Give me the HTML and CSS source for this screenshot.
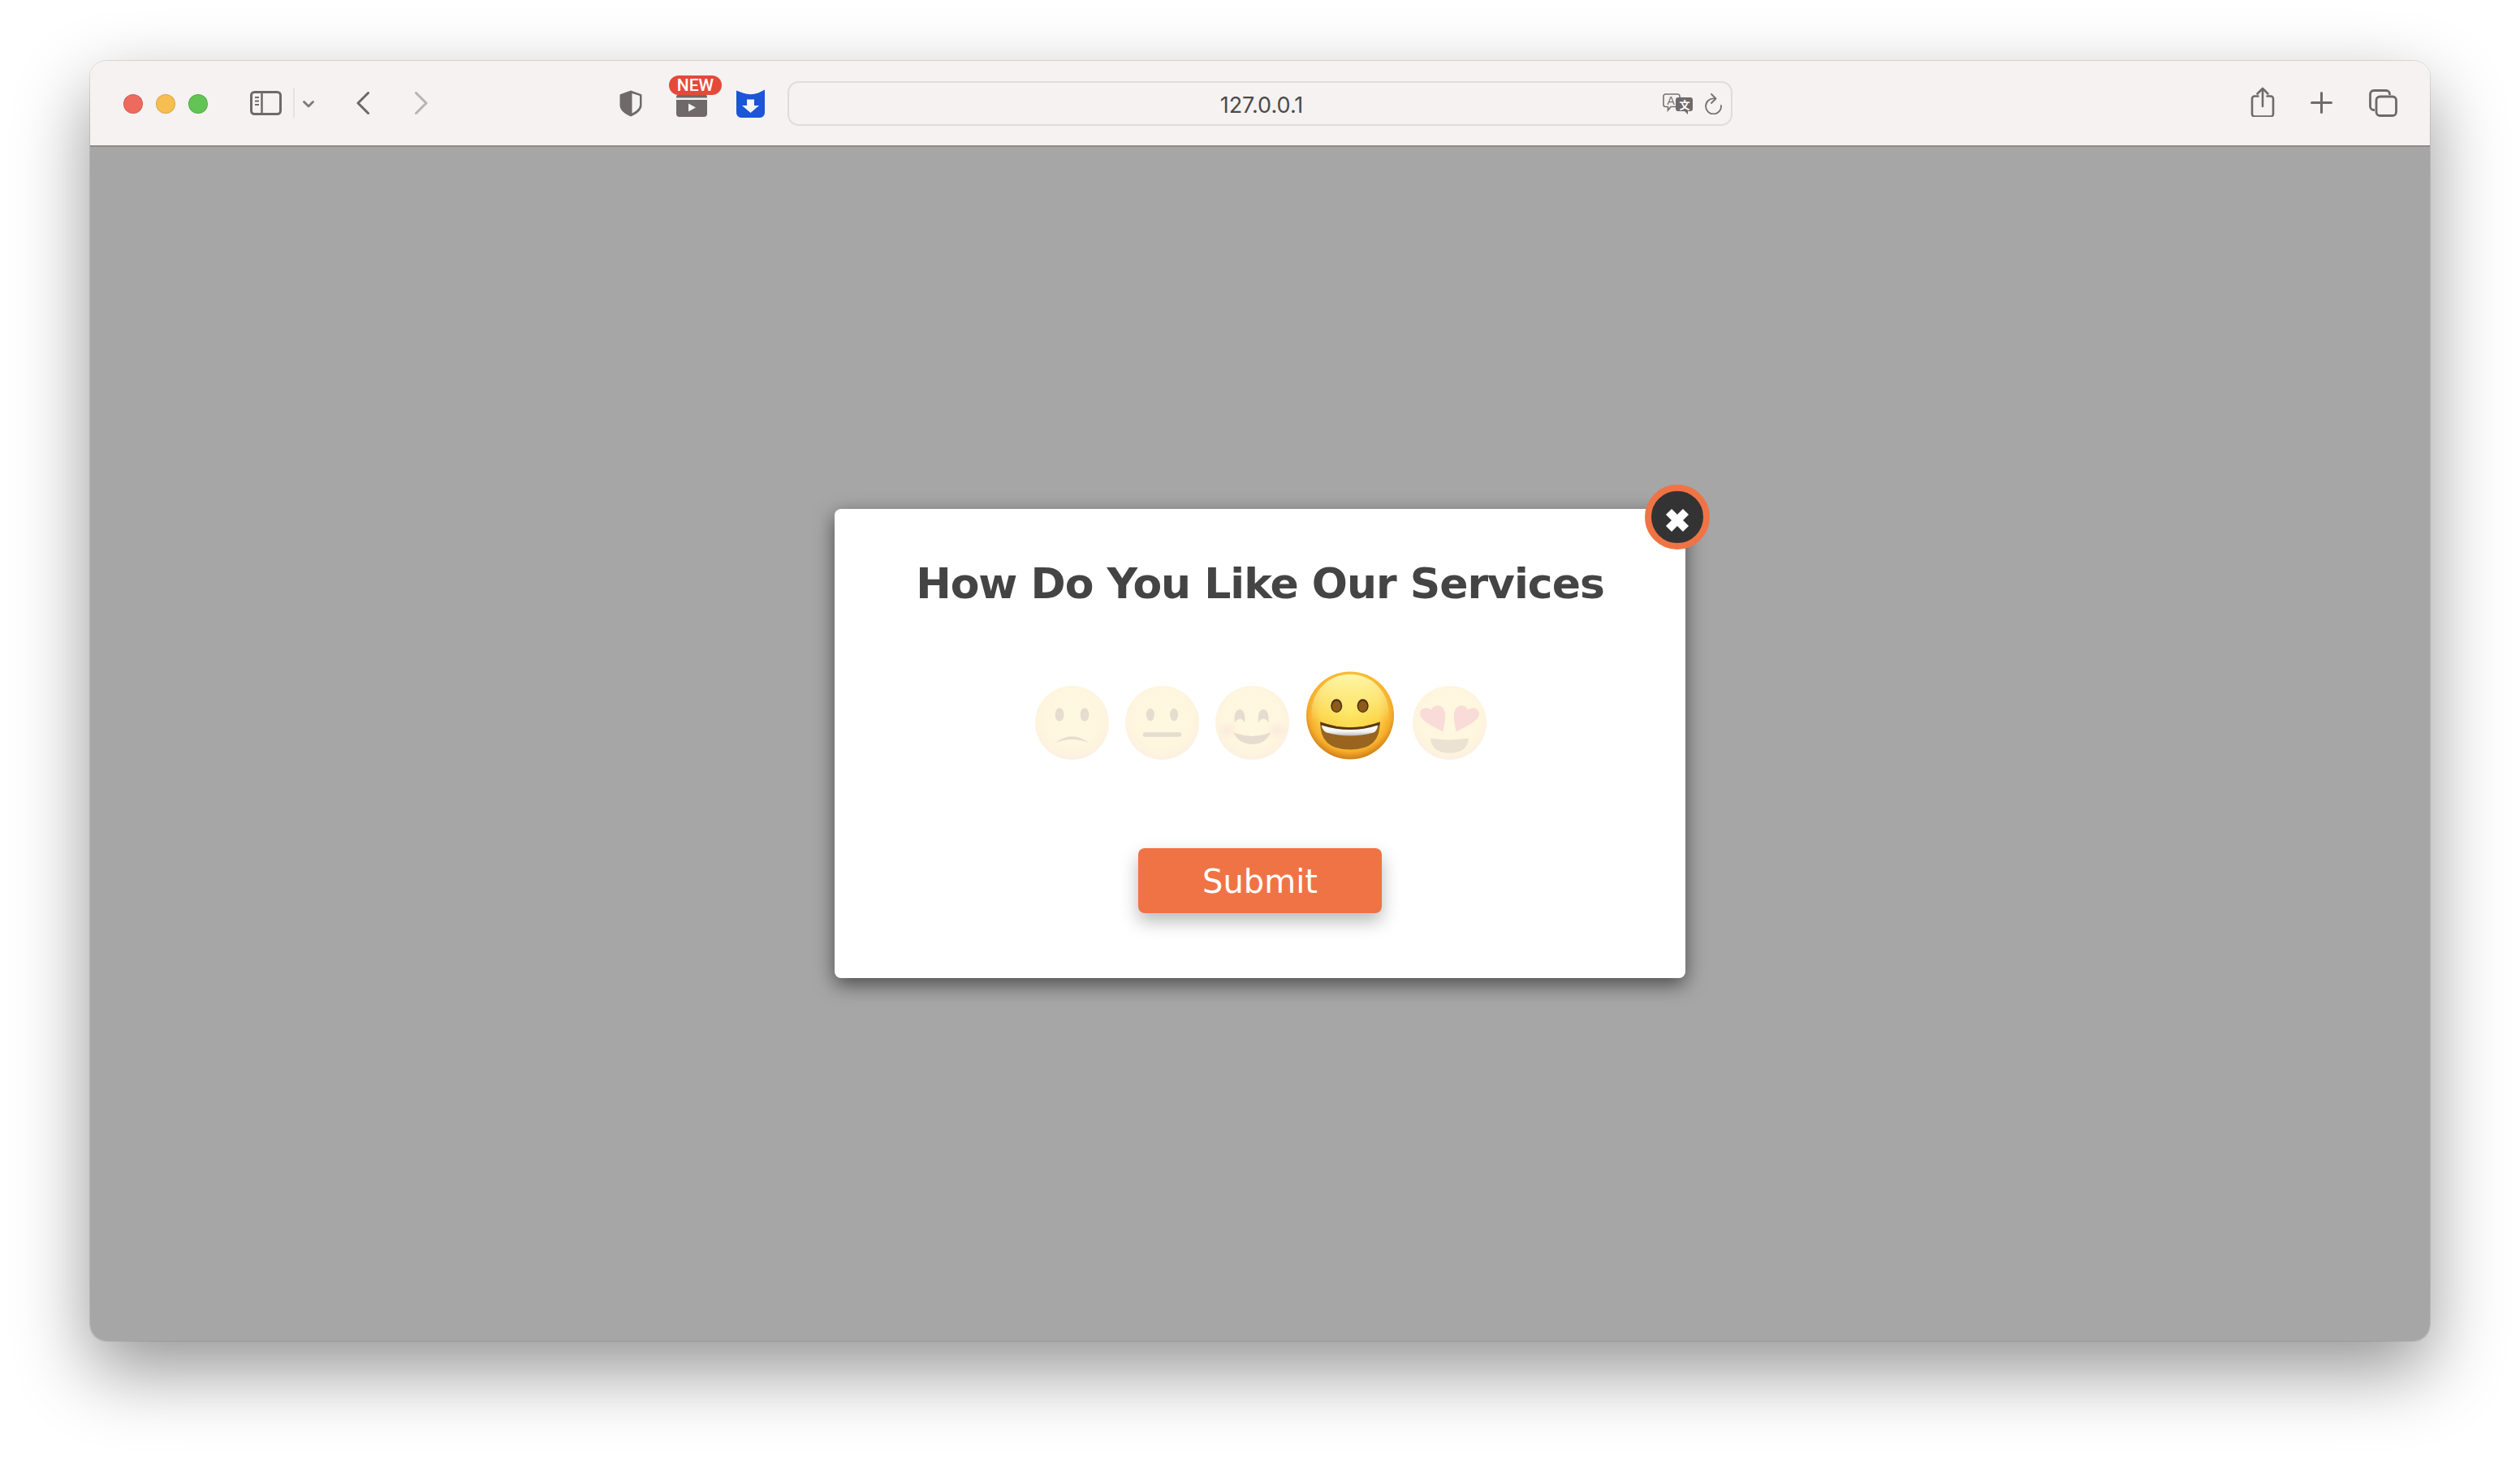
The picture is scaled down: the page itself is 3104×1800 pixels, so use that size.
FILE: index.html
```html
<!DOCTYPE html>
<html lang="en">
<head>
<meta charset="utf-8">
<title>127.0.0.1</title>
<link rel="stylesheet" href="styles.css">
</head>
<body>
<div class="window">
  <header class="toolbar">
    <div class="lights">
      <span class="light light-red"></span>
      <span class="light light-yellow"></span>
      <span class="light light-green"></span>
    </div>
    <svg class="ic-sidebar" viewBox="0 0 39 30"><rect x="1.500" y="1.500" width="36" height="27" rx="4" fill="none" stroke="#6f6a69" stroke-width="3"/><path d="M14.500 2v26" stroke="#6f6a69" stroke-width="2.500"/><path d="M6 8h5M6 12.500h5M6 17h5" stroke="#6f6a69" stroke-width="2"/></svg>
    <span class="divider"></span>
    <svg class="ic-chevron" viewBox="0 0 14 9"><path d="M1.500 1.500 7 7l5.500-5.500" fill="none" stroke="#7d7978" stroke-width="2.800" stroke-linecap="round" stroke-linejoin="round"/></svg>
    <svg class="ic-back" viewBox="0 0 16 28"><path d="M14.500 1.500 2 14l12.500 12.500" fill="none" stroke="#6b6766" stroke-width="3" stroke-linecap="round" stroke-linejoin="round"/></svg>
    <svg class="ic-forward" viewBox="0 0 16 28"><path d="M1.500 1.500 14 14 1.500 26.500" fill="none" stroke="#b6b3b2" stroke-width="3" stroke-linecap="round" stroke-linejoin="round"/></svg>
    <svg class="ic-shield" viewBox="0 0 28 33"><path d="M14 .5 1.500 5C.8 5.300.5 5.800.5 6.500V19c0 5 5.500 10.500 13.500 13.500C22 29.500 27.500 24 27.500 19V6.500c0-.7-.3-1.200-1-1.500Z" fill="#6f6a69"/><path d="M15.500 4v24.500c5.500-2.500 9.500-6.500 9.500-10.500V7Z" fill="#f5f2f1"/></svg>
    <div class="media">
      <svg class="ic-media" viewBox="0 0 38 29"><path d="M0 5a4 4 0 0 1 4-4h30a4 4 0 0 1 4 4v.5H0ZM0 8h38v17a4 4 0 0 1-4 4H4a4 4 0 0 1-4-4Z" fill="#6f6a69"/><path d="M15 12.500v10l9-5Z" fill="#f5f2f1"/></svg>
      <span class="badge">NEW</span>
    </div>
    <svg class="ic-blue" viewBox="0 0 35 35"><path d="M0 1.500 8 4.500Q17.500 8 27 4.500L35 0.500V29a6 6 0 0 1-6 6H6a6 6 0 0 1-6-6Z" fill="#1a56d6"/><path d="M13 12.500h9v7.500h6L17.500 29 7 20h6Z" fill="#f5f7fc"/></svg>
    <div class="address">
      <span class="address-text">127.0.0.1</span>
      <svg class="ic-translate" viewBox="0 0 37 26"><path d="M3.500 1h15A2.500 2.500 0 0 1 21 3.500V14a2.500 2.500 0 0 1-2.500 2.500H10L6.500 21v-4.500h-3A2.500 2.500 0 0 1 1 14V3.500A2.500 2.500 0 0 1 3.500 1Z" fill="#f5f2f1" stroke="#757170" stroke-width="1.600"/><text class="tr-a" x="5.500" y="14">A</text><path d="M19 5h15a3 3 0 0 1 3 3v11a3 3 0 0 1-3 3h-3v4l-4-4h-8a3 3 0 0 1-3-3V8a3 3 0 0 1 3-3Z" fill="#6f6a69"/><text class="tr-b" x="20.500" y="18.500">文</text></svg>
      <svg class="ic-reload" viewBox="0 0 21 26"><path d="M11.500 6.500A9.500 9.500 0 1 0 20 15" fill="none" stroke="#757170" stroke-width="1.800" stroke-linecap="round"/><path d="M8 1l5.500 5.500L8 12" fill="none" stroke="#757170" stroke-width="1.800" stroke-linecap="round" stroke-linejoin="round"/></svg>
    </div>
    <svg class="ic-share" viewBox="0 0 30 37"><path d="M9.500 11.500H5a3 3 0 0 0-3 3v19a3 3 0 0 0 3 3h20a3 3 0 0 0 3-3v-19a3 3 0 0 0-3-3h-4.500" fill="none" stroke="#6f6a69" stroke-width="2.600" stroke-linecap="round"/><path d="M15 2v22M8.500 8.500 15 2l6.500 6.500" fill="none" stroke="#6f6a69" stroke-width="2.600" stroke-linecap="round" stroke-linejoin="round"/></svg>
    <svg class="ic-plus" viewBox="0 0 27 27"><path d="M13.500 1.500v24M1.500 13.500h24" fill="none" stroke="#6f6a69" stroke-width="3" stroke-linecap="round"/></svg>
    <svg class="ic-tabs" viewBox="0 0 35 34"><path d="M7 25.500H6a4.500 4.500 0 0 1-4.500-4.500V6A4.500 4.500 0 0 1 6 1.500h15A4.500 4.500 0 0 1 25.500 6v1" fill="none" stroke="#6f6a69" stroke-width="2.800"/><rect x="9" y="9" width="24.500" height="23.500" rx="4.500" fill="none" stroke="#6f6a69" stroke-width="2.800"/></svg>
  </header>

  <main class="overlay">
    <section class="modal">
      <button class="close" type="button" aria-label="Close">
        <svg class="ic-close" viewBox="0 0 30 30"><path d="M4.500 4.500l21 21M25.500 4.500l-21 21" stroke="#fff" stroke-width="10" fill="none"/></svg>
      </button>
      <h1 class="title">How Do You Like Our Services</h1>
      <div class="faces">
        <svg class="face face-dim" viewBox="0 0 100 100">
          <defs>
            <radialGradient id="skin" cx="50%" cy="44%" r="56%">
              <stop offset="0" stop-color="#fde45c"/>
              <stop offset=".6" stop-color="#fbd446"/>
              <stop offset=".84" stop-color="#f6ae2c"/>
              <stop offset="1" stop-color="#d07d18"/>
            </radialGradient>
            <linearGradient id="glow" x1="0" y1="0" x2="0" y2="1">
              <stop offset="0" stop-color="#fff7a8"/>
              <stop offset=".62" stop-color="#fff7a8" stop-opacity="0"/>
            </linearGradient>
            <radialGradient id="skin-dim" cx="50%" cy="44%" r="56%">
              <stop offset="0" stop-color="#fff8e0"/>
              <stop offset=".72" stop-color="#fef6de"/>
              <stop offset=".93" stop-color="#fdf2e0"/>
              <stop offset="1" stop-color="#fcf0e2"/>
            </radialGradient>
            <radialGradient id="blush">
              <stop offset="0" stop-color="#fbebdc"/>
              <stop offset="1" stop-color="#fbebdc" stop-opacity="0"/>
            </radialGradient>
            <linearGradient id="teeth" x1="0" y1="0" x2="0" y2="1">
              <stop offset="0" stop-color="#ffffff"/>
              <stop offset=".6" stop-color="#f2f2f2"/>
              <stop offset="1" stop-color="#b9b9b9"/>
            </linearGradient>
          </defs>
          <ellipse cx="50" cy="50" rx="50" ry="50" fill="url(#skin-dim)"/>
          <ellipse cx="33" cy="39" rx="6" ry="9" fill="#e6dccf"/>
          <ellipse cx="67" cy="39" rx="6" ry="9" fill="#e6dccf"/>
          <path d="M28 77Q50 60 72 77Q50 68 28 77Z" fill="#e6dccf"/>
        </svg>
        <svg class="face face-dim" viewBox="0 0 100 100">
          <ellipse cx="50" cy="50" rx="50" ry="50" fill="url(#skin-dim)"/>
          <ellipse cx="34" cy="39" rx="5.500" ry="8.500" fill="#e6dccf"/>
          <ellipse cx="66" cy="39" rx="5.500" ry="8.500" fill="#e6dccf"/>
          <rect x="24" y="63" width="52" height="6" rx="2.500" fill="#e6dccf"/>
        </svg>
        <svg class="face face-dim" viewBox="0 0 100 100">
          <ellipse cx="50" cy="50" rx="50" ry="50" fill="url(#skin-dim)"/>
          <ellipse cx="16" cy="60" rx="16" ry="13" fill="url(#blush)"/>
          <ellipse cx="84" cy="60" rx="16" ry="13" fill="url(#blush)"/>
          <path d="M26 50Q25 32 33 32Q41 32 40 50Q33 39 26 50ZM58 50Q57 32 65 32Q73 32 72 50Q65 39 58 50Z" fill="#e6dccf"/>
          <path d="M24 63Q50 73 75 63Q68 79 50 79Q32 79 24 63Z" fill="#e6dccf"/>
        </svg>
        <svg class="face face-active" viewBox="0 0 100 100">
          <ellipse cx="50" cy="50" rx="50" ry="50" fill="url(#skin)"/>
          <ellipse cx="50" cy="47" rx="44" ry="44" fill="url(#glow)"/>
          <ellipse cx="34.500" cy="39" rx="6.500" ry="7.800" fill="#4d2f0e"/>
          <ellipse cx="34.500" cy="39.500" rx="5" ry="6.200" fill="#8e5a1c"/>
          <ellipse cx="64.500" cy="39" rx="6.500" ry="7.800" fill="#4d2f0e"/>
          <ellipse cx="64.500" cy="39.500" rx="5" ry="6.200" fill="#8e5a1c"/>
          <path d="M16 57.500Q50 70 84 57.500Q85 89 50 89Q15 89 16 57.500Z" fill="#98641f"/>
          <path d="M16 57.500Q50 70 84 57.500L83.500 61Q50 72.500 16.500 61Z" fill="#5a3610"/>
          <path d="M17.500 61Q50 71.500 81.500 61Q81 67 77 69.500Q50 77 23 69.500Q18.500 67 17.500 61Z" fill="url(#teeth)"/>
        </svg>
        <svg class="face face-dim" viewBox="0 0 100 100">
          <ellipse cx="50" cy="50" rx="50" ry="50" fill="url(#skin-dim)"/>
          <path d="M41 62C28 55 9 47 10 37C11 29 21 28 26 33C26 27 36 24 41 30C47 37 43 52 41 62Z" fill="#f9dbd8"/>
          <path d="M59 62C72 55 91 47 90 37C89 29 79 28 74 33C74 27 64 24 59 30C53 37 57 52 59 62Z" fill="#f9dbd8"/>
          <path d="M24 71Q50 75 76 71Q74 91 50 91Q26 91 24 71Z" fill="#ebe2d3"/>
        </svg>
      </div>
      <button class="submit" type="button">Submit</button>
    </section>
  </main>
</div>
</body>
</html>
```

FILE: styles.css
```css
* {
  box-sizing: border-box;
}

html,
body {
  margin: 0;
  height: 1800px;
  background: #ffffff;
}

body {
  padding: 75px 0 0 111px;
  overflow: hidden;
}

svg {
  display: block;
  flex: none;
}

.window {
  width: 2882px;
  height: 1577px;
  display: flex;
  flex-direction: column;
  border-radius: 20px;
  overflow: hidden;
  box-shadow: 0 0 0 1px rgba(0, 0, 0, 0.1), 0 36px 90px rgba(0, 0, 0, 0.42);
}

.toolbar {
  flex: none;
  height: 106px;
  display: flex;
  align-items: center;
  padding-left: 41px;
  background: #f5f2f1;
  border-bottom: 2px solid #8d8b8a;
}

.lights {
  display: flex;
  gap: 16px;
  margin-top: 2px;
}

.light {
  width: 24px;
  height: 24px;
  border-radius: 50%;
  border: 1px solid rgba(0, 0, 0, 0.12);
}

.light-red {
  background: #ee6a5f;
}

.light-yellow {
  background: #f6be50;
}

.light-green {
  background: #61c454;
}

.ic-sidebar {
  width: 39px;
  height: 30px;
  margin-left: 52px;
}

.divider {
  width: 2px;
  height: 36px;
  margin-left: 14px;
  background: #e4e1e0;
}

.ic-chevron {
  width: 14px;
  height: 9px;
  margin: 3px 0 0 10px;
}

.ic-back {
  width: 16px;
  height: 28px;
  margin-left: 52px;
}

.ic-forward {
  width: 16px;
  height: 28px;
  margin-left: 56px;
}

.ic-shield {
  width: 28px;
  height: 33px;
  margin: 1px 0 0 236px;
}

.media {
  position: relative;
  width: 65px;
  height: 29px;
  margin: 5px 0 0 33px;
  padding-left: 9px;
}

.ic-media {
  width: 38px;
  height: 29px;
}

.badge {
  position: absolute;
  left: 0;
  top: -22px;
  width: 65px;
  height: 24px;
  border-radius: 12px;
  background: #e5493a;
  color: #ffffff;
  font: 500 21px/24px "Roboto", sans-serif;
  text-align: center;
}

.ic-blue {
  width: 35px;
  height: 35px;
  margin: 1px 0 0 18px;
}

.address {
  position: relative;
  width: 1164px;
  height: 55px;
  margin: 1px 0 0 28px;
  display: flex;
  align-items: center;
  justify-content: flex-end;
  gap: 15px;
  padding-right: 11px;
  border: 2px solid #dfdcdb;
  border-radius: 14px;
}

.address-text {
  position: absolute;
  left: 4px;
  right: 0;
  top: 13px;
  color: #4c4a49;
  font: 400 27px/30px "Inter", sans-serif;
  text-align: center;
}

.ic-translate {
  width: 37px;
  height: 26px;
}

.tr-a {
  fill: #757170;
  font: 400 14px "Liberation Sans", sans-serif;
}

.tr-b {
  fill: #ffffff;
  font: 700 13px "Noto Sans CJK SC", sans-serif;
}

.ic-reload {
  width: 21px;
  height: 26px;
}

.ic-share {
  width: 30px;
  height: 37px;
  margin: -3px 0 0 638px;
}

.ic-plus {
  width: 27px;
  height: 27px;
  margin: -1px 0 0 44px;
}

.ic-tabs {
  width: 35px;
  height: 34px;
  margin-left: 45px;
}

.overlay {
  flex: 1;
  display: flex;
  align-items: center;
  justify-content: center;
  padding-bottom: 1px;
  background: #a6a6a6;
}

.modal {
  position: relative;
  width: 1048px;
  height: 578px;
  display: flex;
  flex-direction: column;
  align-items: center;
  padding-top: 61px;
  background: #ffffff;
  border-radius: 8px;
  box-shadow: 0 8px 24px rgba(0, 0, 0, 0.55);
}

.close {
  position: absolute;
  top: -30px;
  right: -30px;
  width: 80px;
  height: 80px;
  display: flex;
  align-items: center;
  justify-content: center;
  padding: 8px 0 0;
  background: #333333;
  border: 8px solid #f07345;
  border-radius: 50%;
}

.ic-close {
  width: 30px;
  height: 30px;
}

.title {
  margin: 0;
  color: #444444;
  font: 700 52px/62px "DejaVu Sans", sans-serif;
  letter-spacing: -1px;
  text-align: center;
}

.faces {
  display: flex;
  align-items: flex-end;
  gap: 20px;
  margin-top: 77px;
  padding-left: 2px;
}

.face-dim {
  width: 91px;
  height: 91px;
}

.face-active {
  width: 108px;
  height: 109px;
  margin: 0 3px 0 1px;
}

.submit {
  width: 300px;
  height: 80px;
  margin-top: 109px;
  padding: 2px 0 0;
  background: #f07345;
  border: 0;
  border-radius: 8px;
  color: #ffffff;
  font: 400 40px/1 "DejaVu Sans", sans-serif;
  box-shadow: 0 10px 22px rgba(0, 0, 0, 0.28);
}
```
